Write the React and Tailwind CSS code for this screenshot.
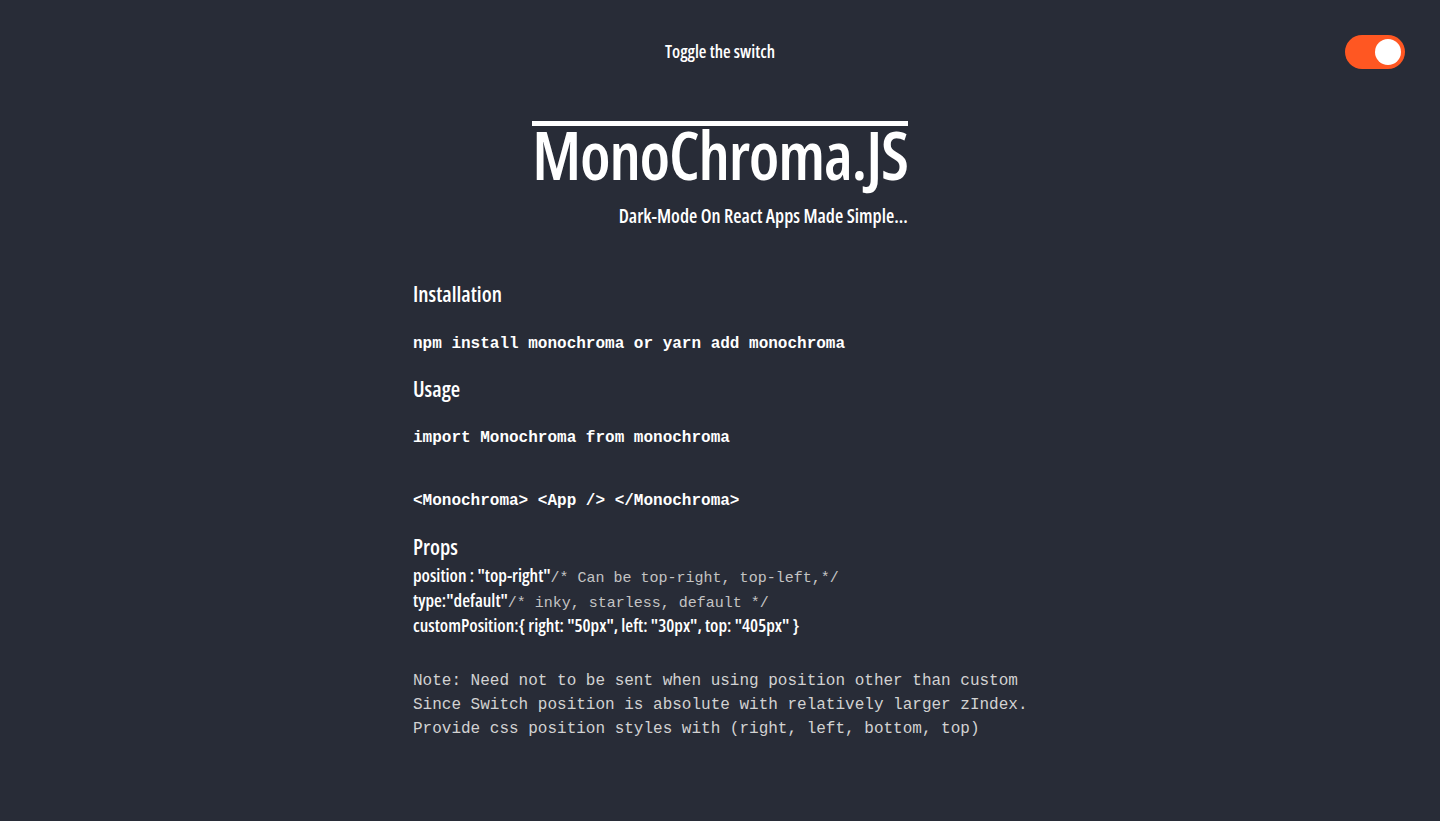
const cond = "font-['Open_Sans',sans-serif] font-stretch-condensed font-semibold";
const mono = "font-['Liberation_Mono','Courier_New',monospace]";

function Toggle() {
  return (
    <div className="absolute right-[35px] top-[35px] w-[60px] h-[34px] rounded-full bg-[#ff5722] flex items-center justify-end px-[4px]">
      <div className="w-[26px] h-[26px] rounded-full bg-white" />
    </div>
  );
}

export default function App() {
  return (
    <div className="relative min-h-screen bg-[#282c37] text-white pb-[60px]">
      <Toggle />
      <p className={`${cond} text-[17.5px] leading-[24px] text-center pt-[39px]`}>Toggle the switch</p>

      <div className="flex justify-center mt-[58px]">
        <div className="flex flex-col items-end">
          <h1 className={`${cond} text-[66px] leading-[56px] tracking-[-1.2px] border-t-[5px] border-white`}>MonoChroma.JS</h1>
          <p className={`${cond} text-[19px] leading-[28px] mt-[20px]`}>Dark-Mode On React Apps Made Simple...</p>
        </div>
      </div>

      <main className="w-[614px] mx-auto mt-[50px]">
        <h2 className={`${cond} text-[21.5px] leading-[28px]`}>Installation</h2>
        <p className={`${mono} font-bold text-[16px] leading-[24px] mt-[24px]`}>npm install monochroma or yarn add monochroma</p>

        <h2 className={`${cond} text-[21.5px] leading-[28px] mt-[19px]`}>Usage</h2>
        <p className={`${mono} font-bold text-[16px] leading-[24px] mt-[23px]`}>import Monochroma from monochroma</p>
        <p className={`${mono} font-bold text-[16px] leading-[24px] mt-[39px]`}>&lt;Monochroma&gt; &lt;App /&gt; &lt;/Monochroma&gt;</p>

        <h2 className={`${cond} text-[21.5px] leading-[28px] mt-[20px]`}>Props</h2>
        <div className="flex flex-col mt-[2px]">
          <div className="flex items-baseline h-[25px]">
            <span className={`${cond} text-[18px] leading-[25px]`}>position : "top-right"</span>
            <span className={`${mono} text-[15px] leading-[25px] text-[#c4c4c4]`}>/* Can be top-right, top-left,*/</span>
          </div>
          <div className="flex items-baseline h-[25px]">
            <span className={`${cond} text-[18px] leading-[25px]`}>type:"default"</span>
            <span className={`${mono} text-[15px] leading-[25px] text-[#c4c4c4]`}>/* inky, starless, default */</span>
          </div>
          <div className="flex items-baseline h-[25px]">
            <span className={`${cond} text-[18px] leading-[25px]`}>customPosition:{'{'} right: "50px", left: "30px", top: "405px" {'}'}</span>
          </div>
        </div>

        <div className={`${mono} text-[16px] leading-[24px] text-[#d2d2d2] mt-[31px] whitespace-nowrap`}>
          <p>Note: Need not to be sent when using position other than custom</p>
          <p>Since Switch position is absolute with relatively larger zIndex.</p>
          <p>Provide css position styles with (right, left, bottom, top)</p>
        </div>
      </main>
    </div>
  );
}
